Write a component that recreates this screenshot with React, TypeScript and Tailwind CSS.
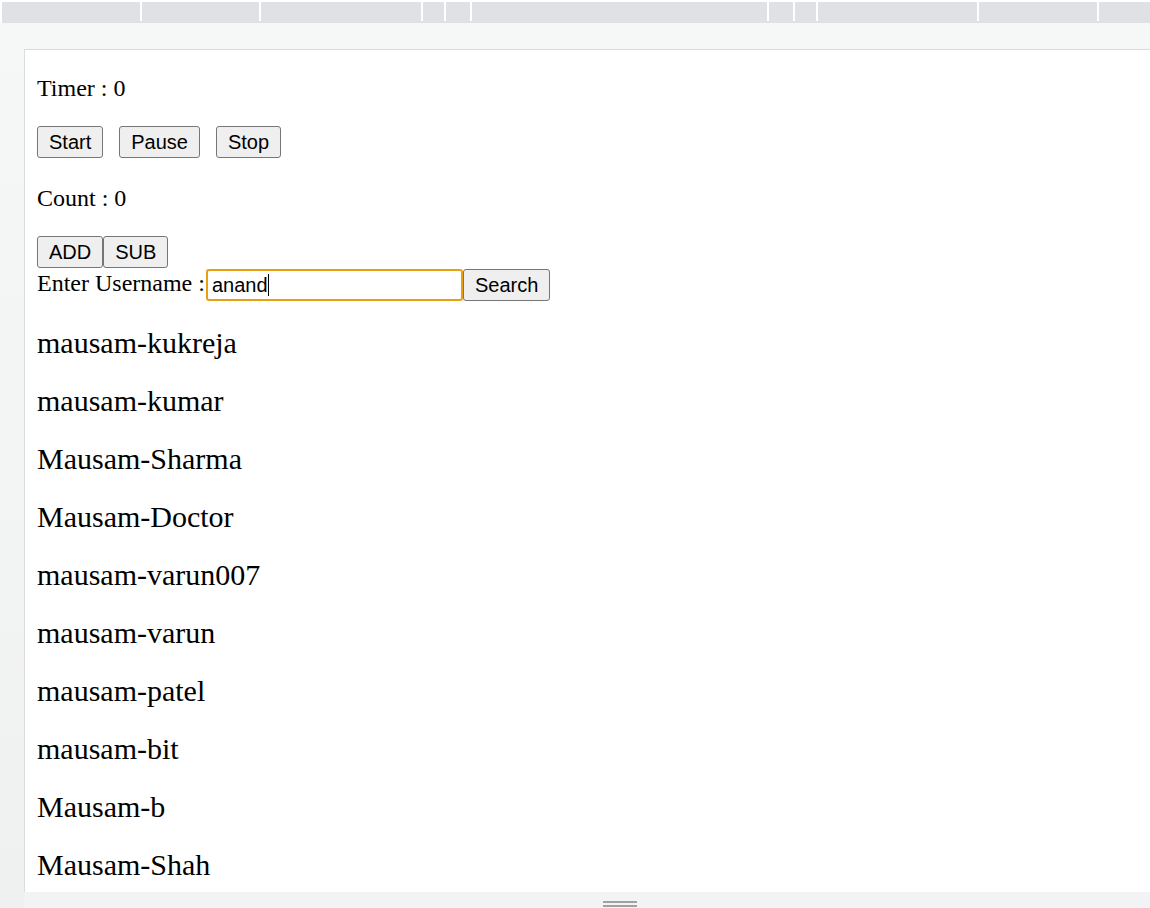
import React from "react";

const segs = [138, 117, 160, 21, 24, 295, 24, 21, 159, 118];

function Btn({ children, className = "" }: { children: React.ReactNode; className?: string }) {
  return (
    <button
      className={
        "h-[32px] border border-[#767676] rounded-[3px] bg-[#efefef] px-[11px] text-[20px] text-black leading-none " +
        className
      }
      style={{ fontFamily: '"Liberation Sans", Arial, sans-serif' }}
    >
      {children}
    </button>
  );
}

const users = [
  "mausam-kukreja",
  "mausam-kumar",
  "Mausam-Sharma",
  "Mausam-Doctor",
  "mausam-varun007",
  "mausam-varun",
  "mausam-patel",
  "mausam-bit",
  "Mausam-b",
  "Mausam-Shah",
];

export default function App() {
  return (
    <div className="w-[1150px] h-[908px] overflow-hidden bg-white flex flex-col">
      <div className="h-[2px] bg-white" />
      <div className="flex h-[21px] pl-[2px] bg-white">
        {segs.map((w, i) => (
          <React.Fragment key={i}>
            <div className="h-[21px] bg-[#dfe1e5]" style={{ width: w }} />
            <div className="w-[2px] h-[21px] flex flex-col">
              <div className="h-[19px] bg-white" />
              <div className="h-[2px] bg-[#dfe1e5]" />
            </div>
          </React.Fragment>
        ))}
        <div className="flex-1 h-[21px] bg-[#dfe1e5]" />
      </div>
      <div className="flex-1 flex flex-col bg-gradient-to-b from-[#f6f7f7] to-[#eff0f0] pt-[26px] pl-[24px] min-h-0">
        <div
          className="flex-1 min-h-0 bg-white border-t border-l border-[#dcdcdc] pl-[12px] pt-[24px] text-black overflow-hidden"
          style={{ fontFamily: '"Liberation Serif", "Times New Roman", serif' }}
        >
          <div className="text-[24px] leading-[28px]">Timer : 0</div>
          <div className="flex gap-[16px] mt-[24px]">
            <Btn>Start</Btn>
            <Btn>Pause</Btn>
            <Btn>Stop</Btn>
          </div>
          <div className="text-[24px] leading-[28px] mt-[26px]">Count : 0</div>
          <div className="flex mt-[24px]">
            <Btn>ADD</Btn>
            <Btn>SUB</Btn>
          </div>
          <div className="flex items-center h-[33px]">
            <span className="text-[24px] leading-[28px] -mt-[3px]">Enter Username :</span>
            <div
              className="ml-[1px] w-[257px] h-[32px] border-2 border-[#e8a010] rounded-[3px] flex items-center pl-[4px] text-[20px]"
              style={{ fontFamily: '"Liberation Sans", Arial, sans-serif' }}
            >
              anand<span className="inline-block w-[1px] h-[22px] bg-black" />
            </div>
            <Btn className="w-[87px] px-0">Search</Btn>
          </div>
          <div className="flex flex-col gap-[24px] mt-[25px]">
            {users.map((u) => (
              <div key={u} className="text-[30px] leading-[34px]">
                {u}
              </div>
            ))}
          </div>
        </div>
        <div className="h-[16px] bg-[#f1f3f4] flex flex-col items-start pl-[579px] pt-[9px] gap-[2px] shrink-0">
          <div className="w-[34px] h-[2px] bg-[#a0a0a0]" />
          <div className="w-[34px] h-[2px] bg-[#a0a0a0]" />
        </div>
      </div>
    </div>
  );
}
